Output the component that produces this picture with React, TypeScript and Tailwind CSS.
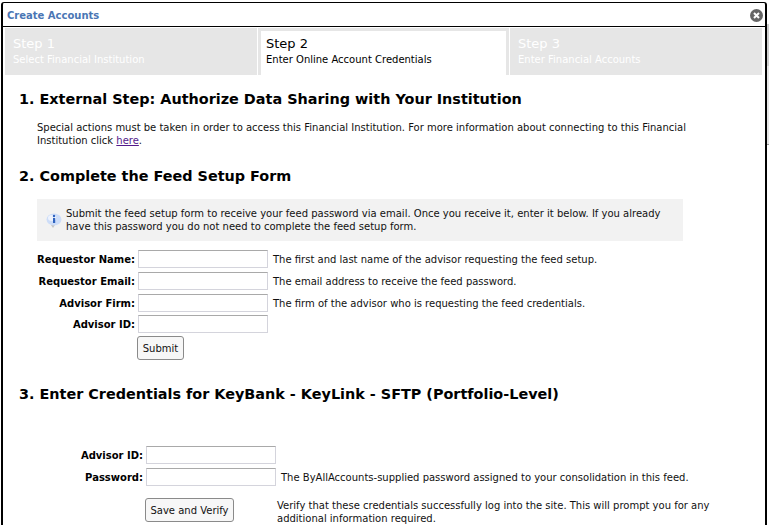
function Step({ title, sub, active }: { title: string; sub: string; active?: boolean }) {
  if (active) {
    return (
      <div className="h-[47px] w-[251px] shrink-0 bg-[#e6e6e6] pl-[3px] pr-[3px] pt-[3px]">
        <div className="h-[44px] bg-white pl-[5px] pt-[5px] text-black">
          <div className="text-[13px] leading-[16px]">{title}</div>
          <div className="mt-px leading-[14px]">{sub}</div>
        </div>
      </div>
    )
  }
  return (
    <div className="h-[47px] flex-1 bg-[#e6e6e6] pl-[8px] pt-[8px] text-white">
      <div className="text-[13px] leading-[16px]">{title}</div>
      <div className="mt-px leading-[14px]">{sub}</div>
    </div>
  )
}

function Field({ label, hint, w = 'w-[116px]', className = '' }: { label: string; hint?: string; w?: string; className?: string }) {
  return (
    <div className={`flex items-center ${className}`}>
      <div className={`${w} text-right font-bold text-black`}>{label}</div>
      <input className="ml-[3px] h-[18px] w-[130px] border border-[#d4d4dc] border-t-[#a9a9a9] bg-white" />
      {hint && <div className="ml-[5px]">{hint}</div>}
    </div>
  )
}

export default function App() {
  return (
    <div className="flex h-[525px] w-[769px] overflow-hidden bg-white font-['DejaVu_Sans',Verdana,sans-serif] text-[10px] leading-[13px] text-[#111]">
      <div className="ml-px mt-[2px] h-[540px] w-[766px] shrink-0 rounded-t-[3px] border-x-2 border-t border-black bg-white">
        <div className="flex h-[24px] items-center justify-between border-b border-black pl-[4px] pr-[2px] pt-[2px]">
          <span className="font-bold text-[#4a76b4]">Create Accounts</span>
          <svg width="13" height="13" viewBox="0 0 13 13">
            <circle cx="6.5" cy="6.5" r="6.5" fill="#666" />
            <path d="M4 4l5 5M9 4l-5 5" stroke="#fff" strokeWidth="2" />
          </svg>
        </div>
        <div className="flex w-[759px] gap-px pl-[2px] pt-px">
          <Step title="Step 1" sub="Select Financial Institution" />
          <Step active title="Step 2" sub="Enter Online Account Credentials" />
          <Step title="Step 3" sub="Enter Financial Accounts" />
        </div>
        <div className="pl-[16px] pt-[15px]">
          <h2 className="text-[14.4px] font-bold leading-[18px] text-black">1. External Step: Authorize Data Sharing with Your Institution</h2>
          <p className="ml-[18px] mt-[13px] w-[655px]">
            Special actions must be taken in order to access this Financial Institution. For more information about connecting to this Financial Institution click <a className="text-[#551a8b] underline">here</a>.
          </p>
          <h2 className="mt-[20px] text-[14.4px] font-bold leading-[18px] text-black">2. Complete the Feed Setup Form</h2>
          <div className="ml-[18px] mt-[14px] flex h-[42px] w-[646px] items-center bg-[#f2f2f2] pl-[9px]">
            <svg width="16" height="16" viewBox="0 0 16 16" className="shrink-0">
              <path d="M5 13l2 3 2-3z" fill="#c4c4c4" />
              <ellipse cx="8" cy="7.5" rx="7.5" ry="6" fill="#cdddf8" />
              <ellipse cx="6" cy="6" rx="4" ry="3" fill="#eef3fd" />
              <circle cx="8" cy="4" r="1.2" fill="#2f63c0" />
              <rect x="7" y="6" width="2.2" height="5" fill="#2f63c0" />
            </svg>
            <p className="ml-[4px] w-[616px]">Submit the feed setup form to receive your feed password via email. Once you receive it, enter it below. If you already have this password you do not need to complete the feed setup form.</p>
          </div>
          <div className="mt-[9px] flex flex-col gap-[4px]">
            <Field label="Requestor Name:" hint="The first and last name of the advisor requesting the feed setup." />
            <Field label="Requestor Email:" hint="The email address to receive the feed password." />
            <Field label="Advisor Firm:" hint="The firm of the advisor who is requesting the feed credentials." />
            <Field className="-mt-px" label="Advisor ID:" />
          </div>
          <button className="ml-[118px] mt-[3px] block h-[24px] w-[47px] rounded-[3px] border border-[#8a8a8a] bg-[#f7f7f7]">Submit</button>
          <h2 className="mt-[25px] text-[14.4px] font-bold leading-[18px] text-black">3. Enter Credentials for KeyBank - KeyLink - SFTP (Portfolio-Level)</h2>
          <div className="mt-[43px] flex flex-col gap-[4px]">
            <Field w="w-[124px]" label="Advisor ID:" />
            <Field w="w-[124px]" label="Password:" hint="The ByAllAccounts-supplied password assigned to your consolidation in this feed." />
          </div>
          <div className="mt-[13px] flex items-start">
            <button className="-mt-px ml-[126px] h-[24px] w-[89px] shrink-0 rounded-[3px] border border-[#8a8a8a] bg-[#f7f7f7]">Save and Verify</button>
            <p className="ml-[43px] w-[436px]">Verify that these credentials successfully log into the site. This will prompt you for any additional information required.</p>
          </div>
        </div>
      </div>
      <div className="flex w-[2px] shrink-0 flex-col pt-[24px]">
        <div className="h-[42px] bg-[#cfcfcf]" />
        <div className="h-[78px] bg-[#e6e6e6]" />
        <div className="h-px bg-[#999]" />
      </div>
    </div>
  )
}
